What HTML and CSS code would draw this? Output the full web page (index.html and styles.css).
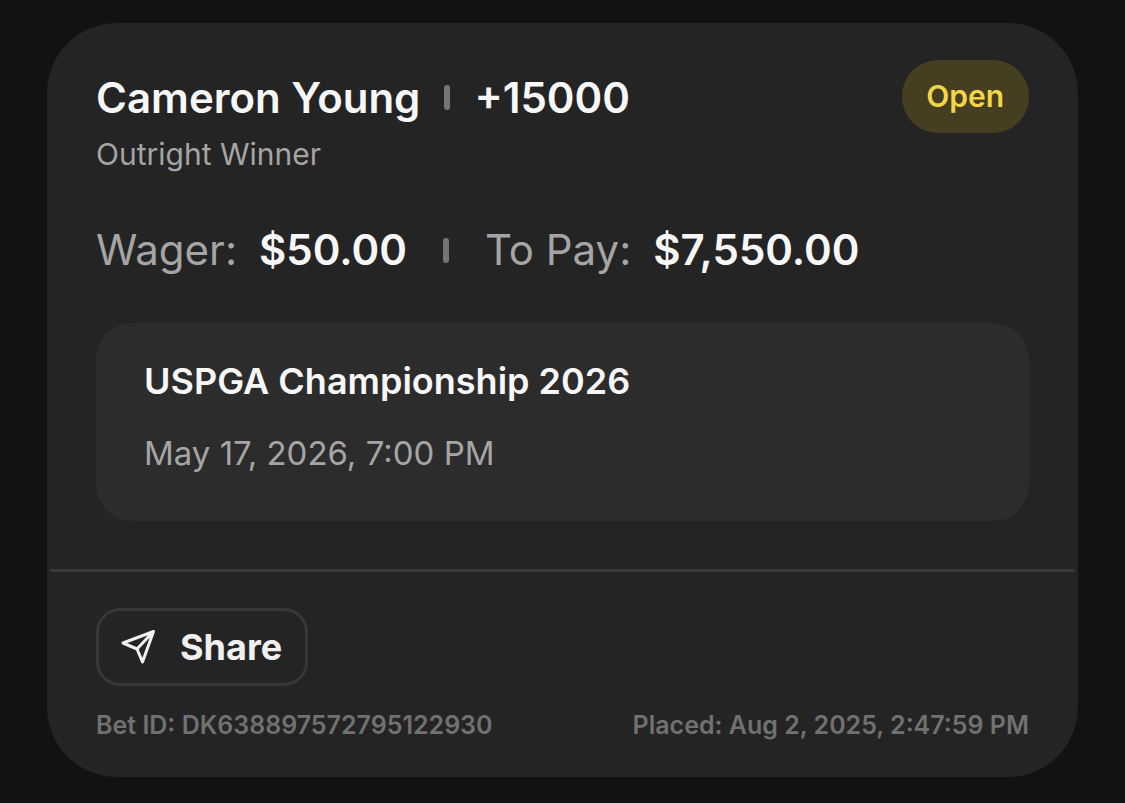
FILE: index.html
```html
<!DOCTYPE html>
<html lang="en">
<head>
<meta charset="utf-8">
<meta name="viewport" content="width=device-width, initial-scale=1">
<title>Bet slip</title>
<link rel="stylesheet" href="styles.css">
</head>
<body>
<main class="page">
  <article class="card">
    <div class="card-main">
      <header class="card-header">
        <h1 class="pick"><span>Cameron Young</span><span class="divider"></span><span>+15000</span></h1>
        <span class="status">Open</span>
      </header>
      <p class="market">Outright Winner</p>
      <dl class="stakes">
        <div class="stake"><dt>Wager:</dt><dd>$50.00</dd></div>
        <div class="divider"></div>
        <div class="stake"><dt>To Pay:</dt><dd>$7,550.00</dd></div>
      </dl>
      <section class="event">
        <h2 class="event-name">USPGA Championship 2026</h2>
        <p class="event-time">May 17, 2026, 7:00 PM</p>
      </section>
    </div>
    <footer class="card-footer">
      <button class="share" type="button">
        <svg class="share-icon" viewBox="0 0 36 36" aria-hidden="true">
          <path d="M33.500 2.500 3 14l14 6 5.500 13L33.500 2.500 17 20"/>
        </svg>
        Share
      </button>
      <div class="meta">
        <span>Bet ID: DK638897572795122930</span>
        <span>Placed: Aug 2, 2025, 2:47:59 PM</span>
      </div>
    </footer>
  </article>
</main>
</body>
</html>
```
FILE: styles.css
```css
* { box-sizing: border-box; }
body {
  margin: 0;
  background: #121212;
  color: #f7f7f7;
  font-family: Inter, "Liberation Sans", sans-serif;
}
h1, h2, p, dl, dd { margin: 0; }
.page { padding: 23px 47px 26px; }
.card {
  background: #242424;
  border-radius: 70px;
  overflow: hidden;
}
.card-main { padding: 37px 49px 48px; }
.card-header {
  display: flex;
  justify-content: space-between;
  align-items: flex-start;
}
.pick {
  display: flex;
  align-items: center;
  gap: 24px;
  font-size: 42px;
  line-height: 75px;
  font-weight: 600;
}
.divider {
  width: 6px;
  height: 25px;
  border-radius: 3px;
  background: #757575;
}
.status {
  padding: 0 25px 0 24px;
  border-radius: 36px;
  background: #453e20;
  color: #f3d648;
  font-size: 30px;
  line-height: 73px;
  font-weight: 600;
}
.market {
  color: #a5a5a5;
  font-size: 30px;
  line-height: 38px;
}
.stakes {
  display: flex;
  align-items: center;
  gap: 36px;
  margin-top: 47px;
  font-size: 42px;
  line-height: 60px;
}
.stake { display: flex; gap: 22px; }
.stake dt { color: #a5a5a5; }
.stake dd { font-weight: 600; }
.event {
  margin-top: 43px;
  padding: 34px 48px 44px;
  border-radius: 36px;
  background: #2c2c2c;
}
.event-name {
  font-size: 36px;
  line-height: 48px;
  font-weight: 600;
}
.event-time {
  margin-top: 24px;
  color: #a5a5a5;
  font-size: 33px;
  line-height: 48px;
}
.card-footer {
  margin: 0 3px;
  padding: 36px 46px 34px;
  border-top: 3px solid #373737;
}
.share {
  display: flex;
  align-items: center;
  gap: 24px;
  padding: 0 23px 0 21px;
  border: 3px solid #373737;
  border-radius: 24px;
  background: transparent;
  color: #f0f0f0;
  font: inherit;
  font-size: 36px;
  line-height: 72px;
  font-weight: 700;
}
.share-icon {
  width: 36px;
  height: 36px;
  fill: none;
  stroke: currentColor;
  stroke-width: 3;
  stroke-linejoin: round;
}
.meta {
  display: flex;
  justify-content: space-between;
  margin-top: 21px;
  color: #717171;
  font-size: 25px;
  line-height: 36px;
  font-weight: 600;
}
```
